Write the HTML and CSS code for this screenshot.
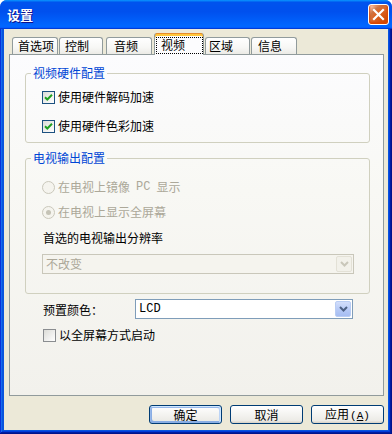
FILE: index.html
```html
<!DOCTYPE html>
<html>
<head>
<meta charset="utf-8">
<title>设置</title>
<link rel="stylesheet" href="styles.css">
</head>
<body>
<div class="window">
  <div class="titlebar">
    <span class="title">设置</span>
    <span class="close">
      <svg width="13" height="13" viewBox="0 0 13 13"><path d="M2 2 L11 11 M11 2 L2 11" stroke="#fff" stroke-width="2.2" stroke-linecap="square" fill="none"/></svg>
    </span>
  </div>
  <div class="frame">
    <div class="client">
      <div class="tabs">
        <div class="tab t1">首选项</div>
        <div class="tab t2">控制</div>
        <div class="tab t3">音频</div>
        <div class="tab sel"><span class="focus">视频</span></div>
        <div class="tab t5">区域</div>
        <div class="tab t6">信息</div>
      </div>
      <div class="panel">
        <fieldset class="group g1">
          <legend>视频硬件配置</legend>
          <div class="row"><span class="cb on"><svg width="11" height="11" viewBox="0 0 11 11"><path d="M2 5.2 L4.3 7.5 L9 2.8" stroke="#21a121" stroke-width="2" fill="none"/></svg></span>使用硬件解码加速</div>
          <div class="row r2"><span class="cb on"><svg width="11" height="11" viewBox="0 0 11 11"><path d="M2 5.2 L4.3 7.5 L9 2.8" stroke="#21a121" stroke-width="2" fill="none"/></svg></span>使用硬件色彩加速</div>
        </fieldset>
        <fieldset class="group g2">
          <legend>电视输出配置</legend>
          <div class="row dis"><span class="rb"></span>在电视上镜像 <span class="mono">PC</span> 显示</div>
          <div class="row dis r2b"><span class="rb on"></span>在电视上显示全屏幕</div>
          <div class="row lbl">首选的电视输出分辨率</div>
          <div class="combo disabled"><span class="val">不改变</span><span class="arrow"><svg width="9" height="6" viewBox="0 0 9 6"><path d="M1 1 L4.5 4.5 L8 1" stroke="#c9c7ba" stroke-width="2" fill="none"/></svg></span></div>
        </fieldset>
        <div class="colorrow">
          <span class="clabel">预置颜色：</span>
          <div class="combo wide"><span class="val mono">LCD</span><span class="arrow blue"><svg width="9" height="6" viewBox="0 0 9 6"><path d="M1 1 L4.5 4.5 L8 1" stroke="#4d6185" stroke-width="2" fill="none"/></svg></span></div>
        </div>
        <div class="row fullrow"><span class="cb"></span>以全屏幕方式启动</div>
      </div>
      <div class="buttons">
        <button class="btn default">确定</button>
        <button class="btn">取消</button>
        <button class="btn">应用<span class="mono small">(<u>A</u>)</span></button>
      </div>
    </div>
  </div>
</div>
</body>
</html>
```
FILE: styles.css
```css
* { box-sizing: border-box; }
html, body { margin: 0; padding: 0; }
body {
  width: 392px;
  height: 434px;
  overflow: hidden;
  background: #fff;
  font-family: "Noto Sans CJK SC", "Liberation Sans", sans-serif;
  font-size: 12px;
  color: #000;
}
.window {
  width: 392px;
  height: 434px;
  display: flex;
  flex-direction: column;
  border-radius: 7px 7px 0 0;
  overflow: hidden;
  background: #0855dd;
}
.titlebar {
  height: 29px;
  flex: none;
  display: flex;
  align-items: center;
  justify-content: space-between;
  padding: 0 3px 0 7px;
  background: linear-gradient(180deg, #0997ff, #0053ee 8%, #0050ee 40%, #0066ff 88%, #0066ff 93%, #005bff 95%, #003dd7 96%, #003dd7);
}
.title {
  color: #fff;
  font-weight: bold;
  font-size: 13px;
  line-height: 16px;
  text-shadow: 1px 1px #0f1089;
}
.close {
  width: 21px;
  height: 21px;
  border: 1px solid #fff;
  border-radius: 3px;
  display: flex;
  align-items: center;
  justify-content: center;
  background-image: radial-gradient(circle at 90% 90%, #cc4600 0, #dc6527 55%, #cd7546 70%, #ffccb2 90%, #fff 100%);
  box-shadow: inset 0 -1px 2px 1px #da4600;
}
.frame {
  flex: 1;
  display: flex;
  padding: 0 4px 4px;
  background: #0855dd;
  box-shadow: inset -1px -1px #00138c, inset 1px 0 #0831d9, inset -2px -2px #001ea0, inset 2px 0 #166aee, inset -3px -3px #003bda, inset 3px 0 #0855dd;
}
.client {
  flex: 1;
  display: flex;
  flex-direction: column;
  background: #ece9d8;
}
.tabs {
  height: 25px;
  flex: none;
  display: flex;
  align-items: flex-end;
  padding-left: 8px;
  position: relative;
  z-index: 1;
}
.tab {
  height: 17px;
  line-height: 16px;
  border: 1px solid #919b9c;
  border-bottom: 0;
  border-radius: 3px 3px 0 0;
  background: linear-gradient(#ffffff, #f7f7f5 60%, #ecebe6);
  padding-left: 5px;
  white-space: nowrap;
}
.t1 { width: 46px; }
.t2 { width: 44px; margin-left: 1px; }
.t3 { width: 46px; margin-left: 3px; padding-left: 7px; }
.t5 { width: 45px; margin-left: 1px; padding-left: 3px; }
.t6 { width: 46px; margin-left: 1px; padding-left: 6px; }
.tab.sel {
  width: 50px;
  height: 22px;
  margin-left: 2px;
  margin-bottom: -1px;
  border-top: 0;
  background: #fcfcfe;
  padding: 4px 0 0 1px;
  box-shadow: inset 0 1px #e68b2c, inset 0 3px #ffc73c;
}
.focus {
  display: block;
  width: 47px;
  height: 17px;
  line-height: 15px;
  outline: 1px dotted #000;
  outline-offset: -1px;
  padding-left: 5px;
}
.panel {
  height: 342px;
  flex: none;
  margin: 0 4px 0 5px;
  border: 1px solid #919b9c;
  background: linear-gradient(#fcfcfe, #f8f8f4 40%, #f2f1ec);
  padding: 11px 13px 0 15px;
  display: flex;
  flex-direction: column;
}
.group {
  margin: 0;
  min-width: 0;
  border: 1px solid #d0d0bf;
  border-radius: 3px;
  padding: 9px 0 8px 0;
}
.group legend {
  margin-left: 5px;
  padding: 0 2px;
  line-height: 14px;
  color: #0046d5;
}
.g2 {
  margin-top: 8px;
  padding: 14px 15px 19px 0;
}
.row {
  display: flex;
  align-items: center;
  height: 16px;
  line-height: 16px;
  gap: 3px;
  margin-left: 16px;
  white-space: nowrap;
}
.r2 { margin-top: 13px; }
.r2b { margin-top: 9px; }
.lbl { margin-top: 10px; margin-left: 17px; }
.dis { color: #aca899; }
.mono {
  font-family: "Liberation Mono", monospace;
  font-size: 12px;
}
.dis .mono { margin: 0 3px; }
.cb {
  width: 13px;
  height: 13px;
  flex: none;
  border: 1px solid #1c5180;
  background: linear-gradient(135deg, #dcdcd7, #ffffff);
  display: flex;
  align-items: center;
  justify-content: center;
}
.rb {
  width: 13px;
  height: 13px;
  flex: none;
  border: 1px solid #cac8bb;
  border-radius: 50%;
  background: #f5f4ee;
  display: flex;
  align-items: center;
  justify-content: center;
}
.rb.on::after {
  content: "";
  width: 5px;
  height: 5px;
  border-radius: 50%;
  background: #c5c3b6;
}
.combo {
  height: 20px;
  display: flex;
  align-items: center;
  justify-content: space-between;
  border: 1px solid #7f9db9;
  background: #fff;
  padding: 1px;
}
.combo .val { padding-left: 2px; line-height: 16px; }
.combo.disabled {
  margin-top: 8px;
  margin-left: 16px;
  border-color: #c9c7ba;
  background: #f5f4ee;
  color: #aca899;
}
.arrow {
  width: 16px;
  height: 16px;
  display: flex;
  align-items: center;
  justify-content: center;
  border: 1px solid #e3e1d6;
  border-radius: 2px;
  background: #f2f1ea;
}
.arrow.blue {
  border-color: #b9cdf4;
  background: linear-gradient(#d2defb, #b4c8f6 60%, #a6bdf2);
}
.colorrow {
  display: flex;
  align-items: center;
  margin-top: 5px;
  margin-left: 18px;
}
.clabel { width: 92px; flex: none; }
.combo.wide { width: 218px; }
.combo.wide .val { padding-left: 2px; }
.fullrow { margin-top: 8px; margin-left: 18px; }
.fullrow .cb { border-color: #8a8d90; }
.buttons {
  display: flex;
  justify-content: flex-end;
  gap: 8px;
  padding-right: 4px;
  margin-top: 9px;
}
.btn {
  width: 73px;
  height: 19px;
  padding: 0;
  font-family: "Noto Sans CJK SC", "Liberation Sans", sans-serif;
  font-size: 12px;
  line-height: 16px;
  color: #000;
  border: 1px solid #003c74;
  border-radius: 3px;
  background: linear-gradient(180deg, #ffffff, #ecebe6 86%, #d6d0c5);
}
.btn.default {
  box-shadow: inset -1px 1px #cee7ff, inset 1px 2px #98b8ea, inset -2px 2px #bcd4f6, inset 1px -1px #89ade4, inset 2px -2px #89ade4;
}
.small { font-size: 11px; margin-left: 1px; }
```
